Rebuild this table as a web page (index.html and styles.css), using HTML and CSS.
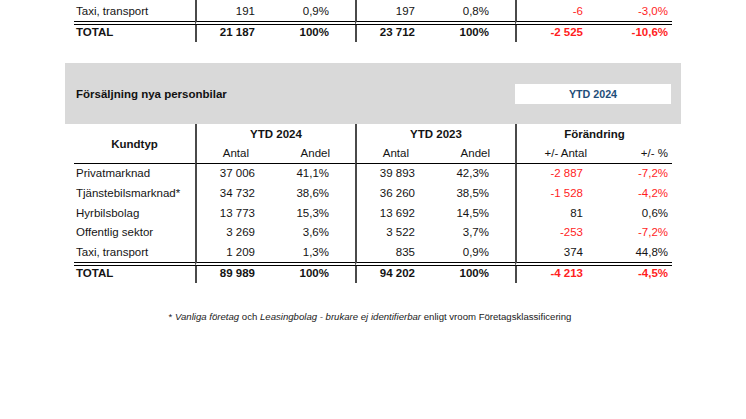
FILE: index.html
```html
<!DOCTYPE html>
<html lang="sv">
<head>
<meta charset="utf-8">
<title>Försäljning nya personbilar</title>
<link rel="stylesheet" href="styles.css">
</head>
<body>
<div class="page">
  <table class="stats stats-top">
    <colgroup>
      <col class="c0"><col class="c1"><col class="c2"><col class="c3"><col class="c4"><col class="c5"><col class="c6">
    </colgroup>
    <tbody>
      <tr class="row-last row-clip">
        <td class="label">Taxi, transport</td>
        <td class="num n1 sep">191</td><td class="num n2">0,9%</td>
        <td class="num n1 sep">197</td><td class="num n2">0,8%</td>
        <td class="num n5 sep neg">-6</td><td class="num n6 neg">-3,0%</td>
      </tr>
      <tr class="row-total">
        <td class="label">TOTAL</td>
        <td class="num n1 sep">21 187</td><td class="num n2">100%</td>
        <td class="num n1 sep">23 712</td><td class="num n2">100%</td>
        <td class="num n5 sep neg">-2 525</td><td class="num n6 neg">-10,6%</td>
      </tr>
    </tbody>
  </table>

  <div class="band">
    <span class="band-title">Försäljning nya personbilar</span>
    <span class="band-period">YTD 2024</span>
  </div>

  <table class="stats">
    <colgroup>
      <col class="c0"><col class="c1"><col class="c2"><col class="c3"><col class="c4"><col class="c5"><col class="c6">
    </colgroup>
    <thead>
      <tr class="head-1">
        <th class="kundtyp" rowspan="2">Kundtyp</th>
        <th class="group sep" colspan="2">YTD 2024</th>
        <th class="group sep" colspan="2">YTD 2023</th>
        <th class="group sep" colspan="2">Förändring</th>
      </tr>
      <tr class="head-2">
        <th class="sub s1 sep">Antal</th><th class="sub s2">Andel</th>
        <th class="sub s1 sep">Antal</th><th class="sub s2">Andel</th>
        <th class="sub s5 sep">+/- Antal</th><th class="sub s6">+/- %</th>
      </tr>
    </thead>
    <tbody>
      <tr>
        <td class="label">Privatmarknad</td>
        <td class="num n1 sep">37 006</td><td class="num n2">41,1%</td>
        <td class="num n1 sep">39 893</td><td class="num n2">42,3%</td>
        <td class="num n5 sep neg">-2 887</td><td class="num n6 neg">-7,2%</td>
      </tr>
      <tr>
        <td class="label">Tjänstebilsmarknad*</td>
        <td class="num n1 sep">34 732</td><td class="num n2">38,6%</td>
        <td class="num n1 sep">36 260</td><td class="num n2">38,5%</td>
        <td class="num n5 sep neg">-1 528</td><td class="num n6 neg">-4,2%</td>
      </tr>
      <tr>
        <td class="label">Hyrbilsbolag</td>
        <td class="num n1 sep">13 773</td><td class="num n2">15,3%</td>
        <td class="num n1 sep">13 692</td><td class="num n2">14,5%</td>
        <td class="num n5 sep">81</td><td class="num n6">0,6%</td>
      </tr>
      <tr>
        <td class="label">Offentlig sektor</td>
        <td class="num n1 sep">3 269</td><td class="num n2">3,6%</td>
        <td class="num n1 sep">3 522</td><td class="num n2">3,7%</td>
        <td class="num n5 sep neg">-253</td><td class="num n6 neg">-7,2%</td>
      </tr>
      <tr class="row-last">
        <td class="label">Taxi, transport</td>
        <td class="num n1 sep">1 209</td><td class="num n2">1,3%</td>
        <td class="num n1 sep">835</td><td class="num n2">0,9%</td>
        <td class="num n5 sep">374</td><td class="num n6">44,8%</td>
      </tr>
      <tr class="row-total">
        <td class="label">TOTAL</td>
        <td class="num n1 sep">89 989</td><td class="num n2">100%</td>
        <td class="num n1 sep">94 202</td><td class="num n2">100%</td>
        <td class="num n5 sep neg">-4 213</td><td class="num n6 neg">-4,5%</td>
      </tr>
    </tbody>
  </table>

  <p class="footnote">* <em>Vanliga företag</em> och <em>Leasingbolag - brukare ej identifierbar</em> enligt vroom Företagsklassificering</p>
</div>
</body>
</html>
```

FILE: styles.css
```css
html, body {
  margin: 0;
  padding: 0;
  background: #ffffff;
}

body {
  font-family: "Liberation Sans", Arial, sans-serif;
  font-size: 11.5px;
  color: #141414;
  overflow: hidden;
}

.page {
  width: 746px;
  height: 419px;
  overflow: hidden;
}

.stats {
  width: 598px;
  margin-left: 74px;
  border-collapse: separate;
  border-spacing: 0;
  table-layout: fixed;
}

.stats-top {
  margin-top: -2px;
}

.c0 { width: 121px; }
.c1 { width: 75px; }
.c2 { width: 85px; }
.c3 { width: 75px; }
.c4 { width: 85px; }
.c5 { width: 83px; }
.c6 { width: 74px; }

.stats td,
.stats th {
  padding: 0;
  line-height: 13px;
  white-space: nowrap;
  overflow: hidden;
}

.stats td {
  height: 19.7px;
}

.sep {
  border-left: 2px solid #4a4a4a;
}

.label {
  text-align: left;
  padding-left: 2px !important;
}

.num { text-align: right; }
.n1 { padding-right: 15px !important; }
.n2 { padding-right: 26px !important; }
.n5 { padding-right: 15px !important; }
.n6 { padding-right: 4px !important; }

.neg { color: #ff1e1e; }

.row-clip td {
  height: 19px;
  padding-top: 4px !important;
}

.row-last td {
  border-bottom: 4px double #000000;
}

.row-total td {
  height: 16px;
  padding-top: 1px !important;
  vertical-align: top;
  font-weight: bold;
}

.band {
  margin: 21px 65px 0 65px;
  height: 61px;
  background: #d9d9d9;
  display: flex;
  align-items: center;
  justify-content: space-between;
  padding: 0 10px 0 11px;
}

.band-title {
  font-weight: bold;
  font-size: 11.5px;
  color: #111111;
}

.band-period {
  width: 156px;
  height: 20px;
  background: #ffffff;
  display: flex;
  align-items: center;
  justify-content: center;
  font-weight: bold;
  font-size: 10.7px;
  color: #1f4e79;
}

.head-1 th {
  height: 20px;
  font-weight: bold;
  text-align: center;
  vertical-align: middle;
}

.head-1 .kundtyp {
  padding-top: 2px;
  border-bottom: 1px solid #000000;
}

.head-2 th {
  height: 19px;
  font-weight: normal;
  text-align: right;
  vertical-align: middle;
  border-bottom: 1px solid #000000;
}

.s1 { padding-right: 21px !important; }
.s2 { padding-right: 25px !important; }
.s5 { padding-right: 11px !important; }
.s6 { padding-right: 4px !important; }

.footnote {
  margin: 28px 0 0 0;
  padding-right: 6px;
  text-align: center;
  font-size: 9.6px;
  color: #1a1a1a;
}

.footnote em {
  font-style: italic;
}
```
